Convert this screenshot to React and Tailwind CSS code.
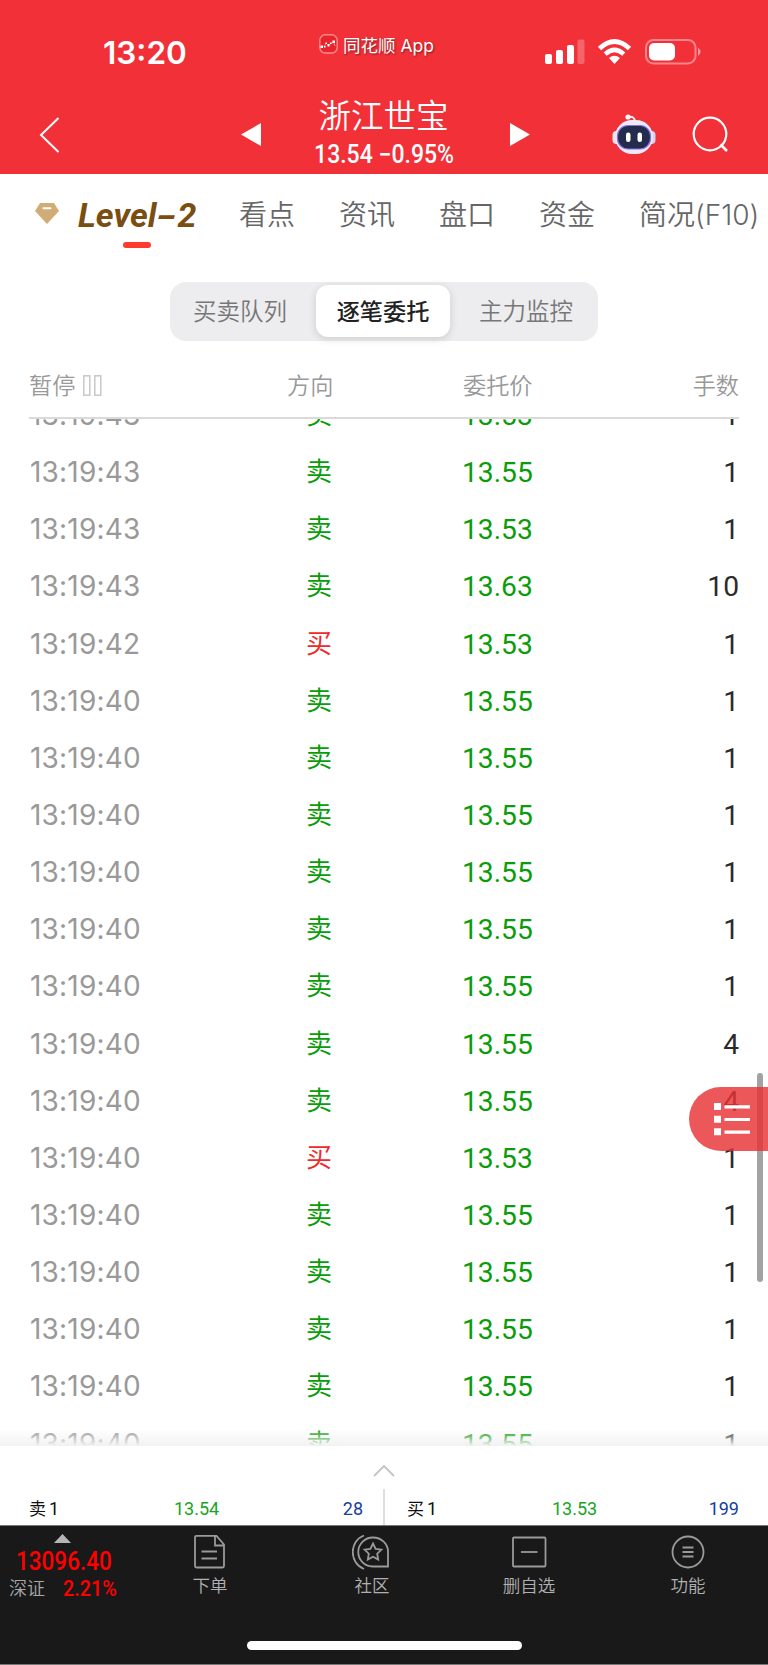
import React from "react";

const ORDERS = [
  ["13:19:43", "卖", "13.53", 1],
  ["13:19:43", "卖", "13.55", 1],
  ["13:19:43", "卖", "13.53", 1],
  ["13:19:43", "卖", "13.63", 10],
  ["13:19:42", "买", "13.53", 1],
  ["13:19:40", "卖", "13.55", 1],
  ["13:19:40", "卖", "13.55", 1],
  ["13:19:40", "卖", "13.55", 1],
  ["13:19:40", "卖", "13.55", 1],
  ["13:19:40", "卖", "13.55", 1],
  ["13:19:40", "卖", "13.55", 1],
  ["13:19:40", "卖", "13.55", 4],
  ["13:19:40", "卖", "13.55", 4],
  ["13:19:40", "买", "13.53", 1],
  ["13:19:40", "卖", "13.55", 1],
  ["13:19:40", "卖", "13.55", 1],
  ["13:19:40", "卖", "13.55", 1],
  ["13:19:40", "卖", "13.55", 1],
  ["13:19:40", "卖", "13.55", 1],
];

const TABS = ["看点", "资讯", "盘口", "资金", "简况(F10)"];

// Status Bar Component
const StatusBar = () => (
  <div className="flex h-[84px] pt-[36px] text-white">
    <div className="w-[319px] pl-[103px] text-[31.5px] leading-[34px] font-semibold">
      13:20
    </div>
    <div className="flex h-[20px] w-[225px] gap-[5px]">
      <svg className="-mt-[2px] h-[20px] w-[19px] shrink-0" viewBox="0 0 19 20" fill="none">
        <rect x="0.8" y="0.8" width="17.4" height="18.2" rx="5.5" fill="#e8242c" stroke="#f98a8e" strokeWidth="1.4" />
        <path d="M1.500 11.500h2.500v2.500H1.500zM5 12h1.500v1.500H5zM6.500 8.500H8V10H6.500zM8.500 10h2v2.500h-2zM11 8.500h1.500V10H11zM13.500 6.500H16v2.500h-2.500z" fill="white" />
        <path d="M5 13l2-4 2.500 2.500L12 9.500l2.500-1.500 1.500 4" stroke="white" strokeOpacity="0.6" strokeWidth="0.8" />
      </svg>
      <span className="text-[17.5px] leading-[19px] whitespace-nowrap [text-shadow:1px_1px_2px_rgba(0,0,0,0.45)]">
        同花顺 App
      </span>
    </div>
    <svg className="h-[30px] w-[160px]" viewBox="544 36 160 30" fill="none">
      <rect x="545" y="54" width="7" height="10" rx="2" fill="white" />
      <rect x="556" y="50" width="7" height="14" rx="2" fill="white" />
      <rect x="567" y="45" width="7" height="19" rx="2" fill="white" />
      <rect x="577.5" y="39.5" width="7" height="24.5" rx="2" fill="white" opacity="0.25" />
      <path d="M599.5 48.5Q614.5 34.5 629.5 48.5" stroke="white" strokeWidth="5" />
      <path d="M605.2 54.2Q614.5 45.5 623.8 54.2" stroke="white" strokeWidth="4.5" />
      <path d="M609 58Q614.5 53.5 620 58L614.5 64Z" fill="white" />
      <rect x="646" y="40" width="49.5" height="23.5" rx="7.5" stroke="white" strokeOpacity="0.42" strokeWidth="2" />
      <rect x="649" y="43" width="26" height="17.5" rx="5" fill="white" />
      <path d="M698 47.500q5 4 0 8.500z" fill="white" opacity="0.5" />
    </svg>
  </div>
);

const Robot = () => (
  <svg className="h-[41px] w-[44px]" viewBox="0 0 44 41" fill="none">
    <path d="M16 3q6-1.500 7 4" stroke="#efeff8" strokeWidth="2" />
    <circle cx="16" cy="3" r="2.6" fill="#f5f5fc" />
    <rect x="0.5" y="17" width="8" height="13" rx="4" fill="#e2e2f0" />
    <rect x="35.5" y="17" width="8" height="13" rx="4" fill="#d6d3f3" />
    <rect x="3" y="6" width="38" height="34" rx="17" fill="#ecebf6" />
    <rect x="5.5" y="11.5" width="33" height="23.5" rx="10.5" fill="#232c4d" stroke="#8d6ce8" strokeWidth="1.2" />
    <rect x="14" y="18.5" width="4.5" height="9.5" rx="2.2" fill="white" />
    <rect x="25.5" y="18.5" width="4.5" height="9.5" rx="2.2" fill="white" />
  </svg>
);

// Stock title with previous / next arrows
const TitleBar = () => (
  <div className="flex h-[90px] text-white">
    <svg className="mt-[32px] ml-[39px] h-[38px] w-[22px]" viewBox="0 0 22 38" fill="none">
      <path d="M19.5 2L2 19L19.5 36" stroke="white" strokeWidth="2" />
    </svg>
    <svg className="mt-[39px] ml-[180px] h-[23px] w-[20px]" viewBox="0 0 20 23">
      <path d="M0 11.5L20 0v23z" fill="white" />
    </svg>
    <div className="ml-[43px] flex w-[160px] flex-col items-center">
      <div className="mt-[13px] -ml-[1px] h-[40px] text-[32.5px] leading-[40px] font-[350] whitespace-nowrap">
        浙江世宝
      </div>
      <div className="mt-[4px] flex h-[28px] items-center justify-center font-[Roboto] text-[25px] leading-[28px] font-medium whitespace-nowrap">
        <span className="scale-x-[0.92]">13.54 −0.95%</span>
      </div>
    </div>
    <svg className="mt-[39px] ml-[46px] h-[23px] w-[20px]" viewBox="0 0 20 23">
      <path d="M20 11.5L0 0v23z" fill="white" />
    </svg>
    <div className="mt-[30px] ml-[82px]">
      <Robot />
    </div>
    <svg className="mt-[32px] ml-[36px] h-[38px] w-[38px]" viewBox="0 0 38 38" fill="none">
      <circle cx="18" cy="18" r="16.3" stroke="white" strokeWidth="2.2" />
      <path d="M28.5 28.5L35 35" stroke="white" strokeWidth="2.6" />
    </svg>
  </div>
);

const TabBar = () => (
  <div className="flex h-[80px] pl-[34px] whitespace-nowrap">
    <svg className="mt-[28px] h-[23px] w-[26px] shrink-0" viewBox="0 0 26 23">
      <path d="M6 1h14l5 8-12 13L1 9z" fill="#d2ac76" />
      <rect x="8.5" y="5.3" width="9" height="2" rx="1" fill="white" />
    </svg>
    <div className="flex w-[179px] shrink-0 flex-col">
      <div className="mt-[21px] pl-[18px] font-[Roboto] text-[34px] leading-[40px] font-bold text-[#7a4e10] italic">
        Level<span className="mx-[4px] inline-block scale-x-[1.7]">-</span>2
      </div>
      <div className="mt-[7px] ml-[63px] h-[6px] w-[28px] rounded-full bg-[#ff3b30]" />
    </div>
    <div className="mt-[21px] flex gap-[44px] text-[28px] leading-[40px] font-[350] text-[#666]">
      {TABS.map((tab) => (
        <span key={tab}>{tab}</span>
      ))}
    </div>
  </div>
);

const Segment = () => (
  <div className="mx-auto mt-[28px] flex h-[59px] w-[428px] items-center rounded-2xl bg-[#ededef] text-[23.5px] leading-[30px] font-[350] text-[#777]">
    <div className="w-[146px] pl-[23px]">买卖队列</div>
    <div className="-mt-[2px] flex h-[52px] w-[134px] items-center justify-center rounded-xl bg-white pt-[2px] text-[23.2px] font-medium text-[#222] shadow-[0_2px_8px_rgba(0,0,0,0.14)]">
      逐笔委托
    </div>
    <div className="pl-[29px]">主力监控</div>
  </div>
);

const ListHeader = () => (
  <div className="mx-[29px] flex h-[78px] items-center border-b-2 border-[#dadada] pt-[13px] text-[23.2px] leading-[30px] font-[350] text-[#999]">
    <div className="flex w-[258px] items-center gap-[8px]">
      暂停
      <svg className="h-[21px] w-[20px]" viewBox="0 0 20 21" fill="none" stroke="#c8c8c8" strokeWidth="1.5">
        <rect x="0.8" y="0.8" width="6" height="19.4" />
        <rect x="11.8" y="0.8" width="6" height="19.4" />
      </svg>
    </div>
    <div className="w-[176px]">方向</div>
    <div>委托价</div>
    <div className="ml-auto">手数</div>
  </div>
);

const OrderRow = ({ order }) => {
  const [time, side, price, lots] = order;
  return (
    <div className="flex h-[57.15px] shrink-0 items-center px-[29px] leading-[40px]">
      <div className="w-[277px] pl-px text-[28px] tracking-[0.2px] text-[#999]">{time}</div>
      <div
        className={`w-[156px] text-[26px] ${
          side === "买" ? "text-[#f02a2a]" : "text-[#0a9c0a]"
        }`}
      >
        {side}
      </div>
      <div className="pt-[2px] font-[Roboto] text-[28.2px] text-[#0a9c0a]">{price}</div>
      <div className="ml-auto pt-[2px] font-[Roboto] text-[28.2px] text-[#2b2b2b]">{lots}</div>
    </div>
  );
};

const OrderList = () => (
  <div className="relative h-[1027px] overflow-hidden">
    <div className="-mt-[32.6px] flex flex-col">
      {ORDERS.map((order, i) => (
        <OrderRow key={i} order={order} />
      ))}
    </div>
    <div className="absolute inset-x-0 bottom-0 h-[17px] bg-linear-to-b from-white/0 to-[#f2f2f2]" />
    <div className="absolute top-[654px] right-[5px] h-[209px] w-[6px] rounded-full bg-[#a2a2a2]" />
    <button className="absolute top-[668px] right-0 h-[64px] w-[79px] rounded-l-full bg-[#e83236]/82">
      <svg className="ml-[25px] h-[33px] w-[37px]" viewBox="0 0 37 33" fill="white">
        <path d="M0 0h7v7H0zM0 12.700h7v7H0zM0 25.300h7v7H0z" />
        <path d="M10.500 2.200H36v3.200H10.500zM10.500 14.900H36v3.200H10.500zM10.500 27.500H36v3.200H10.500z" />
      </svg>
    </button>
  </div>
);

const Quote = ({ side, price, lots }) => (
  <div className="flex flex-1 items-center font-[Roboto,'Noto_Sans_CJK_SC'] text-[18px] leading-[24px]">
    <span className="flex w-[145px] gap-[3px] text-[#111]">
      <span className="text-[17px]">{side}</span>
      <span>1</span>
    </span>
    <span className="text-[#17a51f]">{price}</span>
    <span className="ml-auto text-[#143ea0]">{lots}</span>
  </div>
);

const QuotePanel = () => (
  <div className="h-[79px] bg-white">
    <svg className="mx-auto block h-[43px] w-[22px]" viewBox="0 0 22 43" fill="none">
      <path d="M1 30L11 20L21 30" stroke="#c4c4c4" strokeWidth="1.8" />
    </svg>
    <div className="flex h-[36px] pr-[29px] pl-[29px]">
      <div className="flex w-[356px] border-r-2 border-[#dedede] pt-[3px] pr-[20px]">
        <Quote side="卖" price="13.54" lots="28" />
      </div>
      <div className="flex flex-1 pt-[3px] pl-[22px]">
        <Quote side="买" price="13.53" lots="199" />
      </div>
    </div>
  </div>
);

const NavItem = ({ label, children }) => (
  <div className="flex w-[80px] flex-col items-center text-[17.5px] leading-[24px] font-[350] text-[#b0b0b0]">
    <svg className="h-[40px] w-[40px]" viewBox="0 0 40 40" fill="none" stroke="#9a9a9a" strokeWidth="1.8">
      {children}
    </svg>
    <span className="mt-[2px]">{label}</span>
  </div>
);

const BottomBar = () => (
  <div className="flex h-[140px] flex-col border-t border-b border-[#777] bg-[#191919]">
    <div className="flex h-[115px] pt-[6px]">
      <div className="flex w-[170px] flex-col">
        <svg className="mt-[2px] ml-[54px] h-[9px] w-[17px]" viewBox="0 0 17 9">
          <path d="M8.5 0L17 9H0z" fill="#b5b5b5" />
        </svg>
        <div className="mt-[5px] h-[28px] w-[93px] font-[Roboto] text-[25px] leading-[28px] font-medium text-[#f00]">
          <span className="ml-[16px] inline-block origin-left scale-x-[0.9]">13096.40</span>
        </div>
        <div className="mt-px flex h-[24px] leading-[24px]">
          <span className="ml-[9px] w-[54px] text-[18px] font-[350] text-[#a8a8a8]">深证</span>
          <span className="origin-left scale-x-[0.9] font-[Roboto] text-[22px] font-medium text-[#f00]">
            2.21%
          </span>
        </div>
      </div>
      <NavItem label="下单">
        <path d="M26.500 3.800H6.500a1.500 1.500 0 0 0-1.500 1.500V34a1.500 1.500 0 0 0 1.500 1.500h26A1.500 1.500 0 0 0 34 34V12.500zM25 4v9.500h9M11.500 19.500H27M11.500 26.500H27" />
      </NavItem>
      <div className="ml-[82px]">
        <NavItem label="社区">
          <path d="M21 5.500c8.500 0 15 6.500 15 14V34.500H20.500A14.500 14.500 0 0 1 21 5.500z" />
          <path d="M12 3.500C-3 9 -3 31 12 37" />
          <path d="M21 11.500l2.600 5.300 5.800.8-4.200 4.100 1 5.800-5.200-2.700-5.200 2.700 1-5.800-4.200-4.100 5.800-.8z" />
        </NavItem>
      </div>
      <div className="ml-[77px]">
        <NavItem label="删自选">
          <rect x="4" y="5.5" width="32.5" height="29" rx="1" />
          <path d="M12 20H28.500" />
        </NavItem>
      </div>
      <div className="ml-[79px]">
        <NavItem label="功能">
          <circle cx="20" cy="20" r="15.5" />
          <path d="M14.500 15.500h11M14.500 20h11M14.500 24.500h11" />
        </NavItem>
      </div>
    </div>
    <div className="mx-auto h-[9px] w-[275px] rounded-full bg-white" />
  </div>
);

const App = () => {
  return (
    <div className="h-[1665px] w-[768px] overflow-hidden bg-white font-[Inter,'Noto_Sans_CJK_SC',sans-serif]">
      <header className="h-[174px] bg-[#f23038]">
        <StatusBar />
        <TitleBar />
      </header>
      <TabBar />
      <Segment />
      <ListHeader />
      <OrderList />
      <QuotePanel />
      <BottomBar />
    </div>
  );
};

export default App;
